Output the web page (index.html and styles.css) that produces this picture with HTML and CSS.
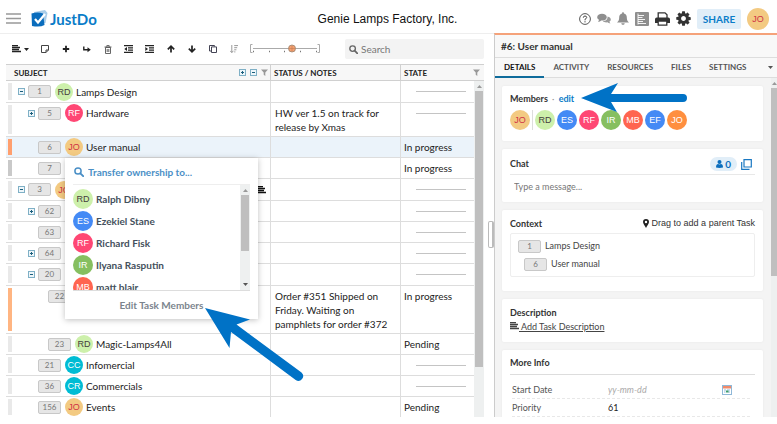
FILE: index.html
```html
<!DOCTYPE html>
<html lang="en">
<head>
<meta charset="utf-8">
<title>JustDo</title>
<link rel="stylesheet" href="styles.css">
</head>
<body>
<svg class="defs" aria-hidden="true">
  <symbol id="plus-box" viewBox="0 0 7 7"><rect x=".5" y=".5" width="6" height="6" fill="#eef6fa" stroke="#7fb0c6"/><path d="M2 3.500h3M3.500 2v3" stroke="#1b5f7d"/></symbol>
  <symbol id="minus-box" viewBox="0 0 7 7"><rect x=".5" y=".5" width="6" height="6" fill="#eef6fa" stroke="#7fb0c6"/><path d="M2 3.500h3" stroke="#1b5f7d"/></symbol>
  <symbol id="funnel" viewBox="0 0 7 7"><path d="M0 .5h7L4.300 3.500V7L2.700 5.800V3.500z" fill="#999"/></symbol>
  <symbol id="search" viewBox="0 0 10 10"><circle cx="4" cy="4" r="3.100" fill="none" stroke="currentColor" stroke-width="1.500"/><path d="M6.300 6.300L9.200 9.200" stroke="currentColor" stroke-width="1.900" stroke-linecap="round"/></symbol>
  <symbol id="lines" viewBox="0 0 9 8"><path d="M0 .5h6M0 2.500h8M0 4.500h7M0 6.500h9" stroke="currentColor" stroke-width="1.400"/></symbol>
</svg>

<header class="topbar">
  <div class="brand">
  <button class="menu" aria-label="Menu"><svg width="15" height="11" viewBox="0 0 15 11"><path d="M0 1h15M0 5.500h15M0 10h15" stroke="#999" stroke-width="1.600"/></svg></button>
  <a class="logo" href="#">
    <svg width="17" height="17" viewBox="0 0 17 17"><path d="M3 2L14 0l2.500 3-2 10-10 1z" fill="#a9cde9"/><path d="M.5 3.500Q7 1.500 12 3.500l1.500 11.500Q9 17.500 1 16z" fill="#0a6dbd"/><path d="M4 9l3 3.500L14 4" fill="none" stroke="#fff" stroke-width="2.200"/></svg>
    <span>JustDo</span>
  </a>
  </div>
  <h1 class="project">Genie Lamps Factory, Inc.</h1>
  <nav class="top-actions">
    <button aria-label="Help"><svg width="12" height="12" viewBox="0 0 12 12"><circle cx="6" cy="6" r="5.400" fill="#fff" stroke="#444" stroke-width=".9"/><path d="M4.300 4.700Q4.400 3 6 3t1.700 1.500Q7.700 5.400 6 6.300V7.300M6 8.200v1.200" fill="none" stroke="#444"/></svg></button>
    <button aria-label="Chats"><svg width="14" height="12" viewBox="0 0 14 12"><path d="M10.500 3.500c2 .4 3.300 1.500 3.300 2.900 0 .9-.5 1.700-1.400 2.200.1.900.5 1.400 1 1.900-1.200 0-2.200-.5-2.900-1.200-2 .3-3.700-.2-4.700-1.100 3 0 5-1.900 4.700-4.700z" fill="#999"/><path d="M5 .8c2.700 0 4.800 1.500 4.800 3.400S7.700 7.600 5 7.600l-.8-.1C3.500 8.200 2.400 8.800 1 8.800c.6-.6.900-1.200 1-2C.900 6.200.2 5.300.2 4.200.2 2.300 2.300.8 5 .8z" fill="#8e8e8e"/></svg></button>
    <button aria-label="Notifications"><svg width="12" height="13" viewBox="0 0 12 13"><path d="M6 .2l.9.400v.8C9 1.900 9.800 3.500 9.800 5.300c0 2.700.7 4 2.200 5.300H0C1.500 9.300 2.200 8 2.200 5.300 2.200 3.500 3 1.900 5.100 1.400V.6zM4.300 11.200h3.400C7.500 12.300 7 12.800 6 12.800s-1.500-.5-1.700-1.600z" fill="#8e8e8e"/></svg></button>
    <button aria-label="Report"><svg width="14" height="14" viewBox="0 0 14 14"><rect width="14" height="14" rx="1" fill="#8e8e8e"/><path d="M3 1.500v11M3 3.500h6M3 5.500h4.500M3 7.500h7M3 9.500h5M3 11.500h8" stroke="#fff" stroke-width=".9"/></svg></button>
    <button aria-label="Print"><svg width="15" height="14" viewBox="0 0 15 14"><path d="M3.200 6V.8h6.800l2 2V6" fill="#fff" stroke="#333" stroke-width="1.300"/><path d="M1.800 5.500h11.400Q15 5.500 15 7.300V11h-3V9H3v2H0V7.300Q0 5.500 1.800 5.500z" fill="#333"/><path d="M3.200 9h8.600v4.200H3.200z" fill="#fff" stroke="#333" stroke-width="1.300"/></svg></button>
    <button aria-label="Settings"><svg width="15" height="15" viewBox="100 100 1592 1592"><path fill="#333" d="M1152 896q0-106-75-181t-181-75-181 75-75 181 75 181 181 75 181-75 75-181zm512-109v222q0 12-8 23t-20 13l-185 28q-19 54-39 91 35 50 107 138 10 12 10 25t-9 23q-27 37-99 108t-94 71q-12 0-26-9l-138-108q-44 23-91 38-16 136-29 186-7 28-36 28h-222q-14 0-24.500-8.500t-11.500-21.500l-28-184q-49-16-90-37l-141 107q-10 9-25 9-14 0-25-11-126-114-165-168-7-10-7-23 0-12 8-23 15-21 51-66.500t54-70.500q-27-50-41-99l-183-27q-13-2-21-12.500t-8-23.500v-222q0-12 8-23t19-13l186-28q14-46 39-92-40-57-107-138-10-12-10-24 0-10 9-23 26-36 98.500-107.500t94.500-71.500q13 0 26 10l138 107q44-23 91-38 16-136 29-186 7-28 36-28h222q14 0 24.500 8.500t11.500 21.500l28 184q49 16 90 37l142-107q9-9 24-9 13 0 25 10 129 119 165 170 7 8 7 22 0 12-8 23-15 21-51 66.500t-54 70.500q26 50 41 98l183 28q13 2 21 12.500t8 23.500z"/></svg></button>
    <button class="share">SHARE</button>
    <span class="avatar big sand">JO</span>
  </nav>
</header>

<div class="work">
<main class="left">
  <div class="toolbar">
    <button class="state-btn" aria-label="State"><svg width="9" height="8"><use href="#lines"/></svg><svg width="5" height="3" viewBox="0 0 5 3"><path d="M0 0h5L2.500 3z" fill="#222"/></svg></button>
    <button aria-label="Note"><svg width="8" height="8" viewBox="0 0 8 8"><path d="M.5.5h7v4.500L5 7.500H.5zM5 7.500V5h2.500" fill="#fff" stroke="#444"/></svg></button>
    <button aria-label="Add"><svg width="8" height="8" viewBox="0 0 8 8"><path d="M4 .8v6.400M.8 4h6.400" stroke="#222" stroke-width="1.800"/></svg></button>
    <button aria-label="Add child"><svg width="8" height="8" viewBox="0 0 8 8"><path d="M.8 1.500v3.200H5" fill="none" stroke="#222" stroke-width="1.400"/><path d="M4.500 2.200L7.800 4.700 4.500 7.200z" fill="#222"/></svg></button>
    <button aria-label="Delete"><svg width="8" height="9" viewBox="0 0 8 9"><path d="M1.500 2.500h5v6h-5zM.5 2h7M2.800 1.800V.6h2.400v1.200M3.200 4v3M4.800 4v3" fill="none" stroke="#555" stroke-width=".9"/></svg></button>
    <button aria-label="Outdent"><svg width="9" height="8" viewBox="0 0 9 8"><path d="M0 .7h9M4 2.900h5M4 5.100h5M0 7.300h9" stroke="#222" stroke-width="1.200"/><path d="M3 2v4L.3 4z" fill="#222"/></svg></button>
    <button aria-label="Indent"><svg width="9" height="8" viewBox="0 0 9 8"><path d="M0 .7h9M4 2.900h5M4 5.100h5M0 7.300h9" stroke="#222" stroke-width="1.200"/><path d="M.3 2v4L3 4z" fill="#222"/></svg></button>
    <button aria-label="Move up"><svg width="8" height="8" viewBox="0 0 8 8"><path d="M4 7.500V1.500M.8 4.300L4 1.200l3.200 3.100" fill="none" stroke="#222" stroke-width="1.700"/></svg></button>
    <button aria-label="Move down"><svg width="8" height="8" viewBox="0 0 8 8"><path d="M4 .5v6M.8 3.700L4 6.800l3.200-3.100" fill="none" stroke="#222" stroke-width="1.700"/></svg></button>
    <button aria-label="Duplicate"><svg width="8" height="8" viewBox="0 0 8 8"><path d="M2.500 1.900h5v5.600h-5zM5.500 1.500V.5h-5v5.500h1.500" fill="none" stroke="#445"/></svg></button>
    <button aria-label="Sort"><svg width="8" height="8" viewBox="0 0 8 8"><path d="M1.800 0v7.500M.2 5.800l1.600 1.800 1.600-1.800M4.200.6H8M4.200 2.700h3M4.200 4.800h2.200M4.200 6.900h1.200" fill="none" stroke="#999"/></svg></button>
    <svg class="zoomer" width="70" height="10" viewBox="0 0 70 10"><path d="M2.500.5h-2v8h2M67.500.5h2v8h-2" fill="none" stroke="#aaa"/><path d="M3 4.500h64" stroke="#aaa"/><path d="M3 7.500h1M19 7.500h1M34 7.500h1M50 7.500h1M66 7.500h1" stroke="#777" stroke-width="1.400"/><circle cx="42" cy="4.500" r="3.500" fill="#f4a070" stroke="#99836f" stroke-width=".8"/><path d="M39 4.500h6M42 2v5" stroke="#c47a50" stroke-width=".6"/></svg>
    <label class="search"><svg width="9" height="9"><use href="#search"/></svg><input type="text" placeholder="Search" aria-label="Search"></label>
  </div>

  <div class="grid-wrap">
  <table class="tasks">
    <colgroup><col class="c-subject"><col class="c-notes"><col class="c-state"></colgroup>
    <thead><tr>
      <th><div class="th"><span>SUBJECT</span><span class="tools"><svg width="7" height="7"><use href="#plus-box"/></svg><svg width="7" height="7"><use href="#minus-box"/></svg><svg width="7" height="7"><use href="#funnel"/></svg></span></div></th>
      <th>STATUS / NOTES</th>
      <th><div class="th"><span>STATE</span><svg width="7" height="7"><use href="#funnel"/></svg></div></th>
    </tr></thead>
    <tbody>
      <tr class="parent"><td><div class="subj l0"><i class="bar"></i><svg class="tog"><use href="#minus-box"/></svg><span class="num">1</span><span class="avatar lime">RD</span><span>Lamps Design</span></div></td><td></td><td class="none"><hr></td></tr>
      <tr><td><div class="subj l1"><i class="bar"></i><svg class="tog"><use href="#plus-box"/></svg><span class="num">5</span><span class="avatar pink">RF</span><span>Hardware</span></div></td><td>HW ver 1.5 on track for release by Xmas</td><td class="none"><hr></td></tr>
      <tr class="selected"><td><div class="subj l1"><i class="bar orange"></i><span class="tog"></span><span class="num">6</span><span class="avatar sand">JO</span><span>User manual</span></div></td><td></td><td>In progress</td></tr>
      <tr><td><div class="subj l1"><i class="bar gray"></i><span class="tog"></span><span class="num">7</span></div></td><td></td><td>In progress</td></tr>
      <tr class="parent"><td><div class="subj l0"><i class="bar"></i><svg class="tog"><use href="#minus-box"/></svg><span class="num">3</span><span class="avatar sand">JO</span><svg class="desc" width="9" height="8"><use href="#lines"/></svg></div></td><td></td><td class="none"><hr></td></tr>
      <tr><td><div class="subj l1"><i class="bar"></i><svg class="tog"><use href="#plus-box"/></svg><span class="num">62</span></div></td><td></td><td class="none"><hr></td></tr>
      <tr><td><div class="subj l1"><i class="bar"></i><span class="tog"></span><span class="num">63</span></div></td><td></td><td class="none"><hr></td></tr>
      <tr><td><div class="subj l1"><i class="bar"></i><svg class="tog"><use href="#plus-box"/></svg><span class="num">64</span></div></td><td></td><td class="none"><hr></td></tr>
      <tr class="parent"><td><div class="subj l1"><i class="bar"></i><svg class="tog"><use href="#minus-box"/></svg><span class="num">20</span></div></td><td></td><td class="none"><hr></td></tr>
      <tr><td><div class="subj l2"><i class="bar peach"></i><span class="tog"></span><span class="num">22</span></div></td><td>Order #351 Shipped on Friday. Waiting on pamphlets for order #372</td><td>In progress</td></tr>
      <tr><td><div class="subj l2"><i class="bar"></i><span class="tog"></span><span class="num">23</span><span class="avatar lime">RD</span><span>Magic-Lamps4All</span></div></td><td></td><td>Pending</td></tr>
      <tr><td><div class="subj l1"><i class="bar"></i><span class="tog"></span><span class="num">21</span><span class="avatar cyan">CC</span><span>Infomercial</span></div></td><td></td><td class="none"><hr></td></tr>
      <tr><td><div class="subj l1"><i class="bar"></i><span class="tog"></span><span class="num">36</span><span class="avatar cyan">CR</span><span>Commercials</span></div></td><td></td><td class="none"><hr></td></tr>
      <tr><td><div class="subj l1"><i class="bar"></i><span class="tog"></span><span class="num">156</span><span class="avatar sand">JO</span><span>Events</span></div></td><td></td><td>Pending</td></tr>
    </tbody>
  </table>
  <div class="scroll grid-scroll"><svg width="5" height="3" viewBox="0 0 5 3"><path d="M2.500 0L5 3H0z" fill="#999"/></svg><i></i></div>
  </div>

  <div class="popup">
    <div class="popup-head"><svg width="10" height="10"><use href="#search"/></svg><input type="text" placeholder="Transfer ownership to..." aria-label="Transfer ownership to"></div>
    <div class="popup-body">
      <ul class="people">
        <li><span class="avatar mid lime">RD</span>Ralph Dibny</li>
        <li><span class="avatar mid blue">ES</span>Ezekiel Stane</li>
        <li><span class="avatar mid pink">RF</span>Richard Fisk</li>
        <li><span class="avatar mid green">IR</span>Ilyana Rasputin</li>
        <li><span class="avatar mid red">MB</span>matt blair</li>
      </ul>
      <div class="scroll"><svg width="5" height="3" viewBox="0 0 5 3"><path d="M2.500 0L5 3H0z" fill="#999"/></svg><i></i><svg width="5" height="3" viewBox="0 0 5 3"><path d="M0 0h5L2.500 3z" fill="#555"/></svg></div>
    </div>
    <button class="popup-foot">Edit Task Members</button>
  </div>
  <div class="splitter"></div>
</main>

<aside class="details">
  <h2 class="task-title">#6: User manual</h2>
  <nav class="tabs">
    <button class="active">DETAILS</button><button>ACTIVITY</button><button>RESOURCES</button><button>FILES</button><button>SETTINGS</button>
    <svg width="5" height="3" viewBox="0 0 5 3"><path d="M0 0h5L2.500 3z" fill="#555"/></svg>
  </nav>
  <div class="pane">
    <div class="cards">
      <section class="card members">
        <h3>Members <span class="dot">·</span> <a href="#">edit</a></h3>
        <div class="faces"><span class="avatar mid sand">JO</span><i class="sep"></i><span class="avatar mid lime">RD</span><span class="avatar mid blue">ES</span><span class="avatar mid pink">RF</span><span class="avatar mid green">IR</span><span class="avatar mid red">MB</span><span class="avatar mid blue">EF</span><span class="avatar mid amber">JO</span></div>
      </section>
      <section class="card chat">
        <div class="chat-head"><h3>Chat</h3><span class="pill"><svg width="7" height="8" viewBox="0 0 7 8"><circle cx="3.500" cy="2.100" r="2" fill="#0a6dbd"/><path d="M0 7.600C0 5 1 4.200 2 4.100q1.500.8 3 0C6 4.200 7 5 7 7.600q-3.500.8-7 0z" fill="#0a6dbd"/></svg>0</span><button aria-label="Pop out"><svg width="11" height="11" viewBox="0 0 11 11"><path d="M3 .7h7.300V8H3zM.7 3v7.300H8.500" fill="none" stroke="#1a78c2" stroke-width="1.200"/></svg></button></div>
        <input type="text" placeholder="Type a message..." aria-label="Message">
      </section>
      <section class="card context">
        <div class="context-head"><h3>Context</h3><span class="drag"><svg width="6" height="9" viewBox="0 0 6 9"><path fill-rule="evenodd" d="M3 0a3 3 0 0 1 3 3c0 1.500-1.800 3.500-3 6C1.800 6.500 0 4.500 0 3a3 3 0 0 1 3-3zm0 1.800a1.200 1.200 0 1 0 0 2.400 1.200 1.200 0 0 0 0-2.400z" fill="#222"/></svg>Drag to add a parent Task</span></div>
        <ul class="tree"><li><span class="num">1</span>Lamps Design</li><li class="child"><span class="num">6</span>User manual</li></ul>
      </section>
      <section class="card description">
        <h3>Description</h3>
        <a href="#"><svg width="9" height="8"><use href="#lines"/></svg> Add Task Description</a>
      </section>
      <section class="card info">
        <h3>More Info</h3>
        <div class="field"><label for="start">Start Date</label><input id="start" class="date" type="text" placeholder="yy-mm-dd"><svg width="10" height="10" viewBox="0 0 10 10"><rect x=".5" y=".5" width="9" height="9" fill="#fff" stroke="#8fb8d8"/><path d="M1 1h8v2.500H1z" fill="#f08a6a"/><path d="M2 5h2M5 5h3M2 7h1.500M6 7h2" stroke="#8fb8d8"/><path d="M4 6.500h2.500" stroke="#3c9c6a" stroke-width="2"/></svg></div>
        <div class="field"><label for="prio">Priority</label><input id="prio" type="text" value="61"></div>
      </section>
    </div>
    <div class="scroll pane-scroll"><svg width="5" height="3" viewBox="0 0 5 3"><path d="M2.500 0L5 3H0z" fill="#999"/></svg><i></i></div>
  </div>
  <svg class="arrow arrow-edit" width="108" height="32" viewBox="0 0 108 32"><path d="M0 15L37 0 30 11H102a4 4 0 0 1 0 8H30l6 10z" fill="#0072c6"/></svg>
</aside>
<svg class="arrow arrow-members" width="100" height="76" viewBox="0 0 100 76"><path d="M0 0L45 11.500 31.500 16.500 96.500 64.500a4.800 4.800 0 0 1-5.800 7.600L26 24l-1.500 16z" fill="#0072c6"/></svg>
</div>
</body>
</html>
```
FILE: styles.css
```css
* { box-sizing: border-box; }

body {
  margin: 0;
  height: 100vh;
  padding-bottom: 7px;
  display: flex;
  flex-direction: column;
  overflow: hidden;
  background: #fff;
  color: #222;
  font: 10px/14px Lato, "Liberation Sans", sans-serif;
}

h1, h2, h3, ul, hr { margin: 0; padding: 0; }
ul { list-style: none; }
button, input { font: inherit; color: inherit; border: 0; background: none; padding: 0; margin: 0; }
input { min-width: 0; outline: 0; }
svg { display: block; flex: none; }
.defs { position: absolute; width: 0; height: 0; }

/* Top bar */
.topbar {
  height: 33px;
  flex: none;
  display: grid;
  grid-template-columns: 1fr auto 1fr;
  align-items: center;
  padding: 4px 8px 0 6px;
}
.brand { display: flex; align-items: center; }
.logo {
  display: flex;
  align-items: center;
  gap: 2px;
  margin-left: 10px;
  color: #0a7cc8;
  font-size: 15px;
  font-weight: 700;
  line-height: 20px;
  text-decoration: none;
}
.project {
  text-align: center;
  font: 400 12px/16px "Liberation Sans", sans-serif;
  color: #111;
}
.top-actions { display: flex; align-items: center; justify-content: flex-end; gap: 6px; }
.share {
  width: 44px;
  height: 20px;
  background: #e1eef8;
  color: #0a7cc8;
  font-weight: 700;
  border-radius: 2px;
}

/* Avatars and task numbers */
.avatar {
  flex: none;
  width: 18px;
  height: 18px;
  border-radius: 50%;
  text-align: center;
  font: 400 9px/18px "Liberation Sans", sans-serif;
  color: #fff;
}
.avatar.mid { width: 20px; height: 20px; line-height: 20px; }
.avatar.big { width: 22px; height: 22px; line-height: 22px; }
.sand { background: #f3ca82; color: #cf3345; }
.lime { background: #cdf0ab; color: #463c3c; }
.pink { background: #ff4774; }
.blue { background: #448af5; }
.green { background: #86bf60; }
.red { background: #ff6550; }
.amber { background: #ff8f3f; }
.cyan { background: #00bcd4; }

.num {
  flex: none;
  width: 23px;
  height: 13px;
  border: 1px solid #c8c8c8;
  border-radius: 2px;
  background: #e6e6e6;
  color: #777;
  font-size: 8px;
  line-height: 11px;
  text-align: center;
}

/* Work area */
.work { position: relative; flex: 1; min-height: 0; display: flex; }
.left {
  position: relative;
  flex: 1;
  min-width: 0;
  padding: 0 10px 0 6px;
  border-top: 1px solid #eee;
  display: flex;
  flex-direction: column;
}
.toolbar {
  height: 30px;
  flex: none;
  display: flex;
  align-items: center;
  padding-left: 6px;
}
.toolbar button { flex: none; width: 21px; display: flex; justify-content: center; align-items: center; }
.toolbar .state-btn { width: 22px; gap: 3px; justify-content: flex-start; }
.zoomer { margin: 0 25px 0 6px; }
.search {
  flex: 1;
  min-width: 0;
  height: 20px;
  display: flex;
  align-items: center;
  gap: 3px;
  padding-left: 4px;
  background: #f3f3f3;
  color: #666;
  border-radius: 2px;
}
.search input { flex: 1; }
::placeholder { color: #777; opacity: 1; }

/* Task table */
.grid-wrap { position: relative; flex: 1; min-height: 0; overflow: hidden; }
.tasks { width: 100%; table-layout: fixed; border-collapse: separate; border-spacing: 0; }
.c-subject { width: 265px; }
.c-notes { width: 130px; }
th {
  height: 17px;
  padding: 0 4px 0 3px;
  background: #f7f7f7;
  border: solid #d0d0d0;
  border-width: 1px 1px 1px 0;
  text-align: left;
  font-size: 8px;
  line-height: 14px;
}
th:first-child { padding: 0 2px 0 8px; }
th:last-child { border-right: 0; }
.th { display: flex; align-items: center; justify-content: space-between; }
.tools { display: flex; gap: 4px; }
td {
  height: 21px;
  padding: 3px 4px 2px;
  border-right: 1px solid #ddd;
  border-bottom: 1px solid #ddd;
  vertical-align: top;
}
td:last-child { padding-left: 3px; border-right: 0; }
td:first-child { padding: 0; position: relative; }
.parent td { height: 22px; }
.selected td { background: #ebf3fa; }
.none hr { width: 50px; margin: 7px 0 0 12px; border: 0; border-top: 1px solid #c4c4c4; }
.subj { display: flex; align-items: center; height: 20px; padding-left: 12px; }
.parent .subj { height: 21px; }
.subj.l1 { padding-left: 22px; }
.subj.l2 { padding-left: 32px; }
.tog { width: 7px; height: 7px; margin-right: 3px; }
.subj .avatar { margin: 0 3px 0 4px; }
.desc { margin-left: auto; margin-right: 4px; color: #111; }
.bar { position: absolute; left: 2px; top: 2px; bottom: 2px; width: 4px; background: #e9e9e9; }
.bar.orange { background: #ff9f6e; }
.bar.peach { background: #ffb582; }
.bar.gray { background: #c9c9c9; }

/* Scroll bars */
.scroll {
  flex: none;
  width: 10px;
  display: flex;
  flex-direction: column;
  align-items: center;
  gap: 3px;
  padding: 4px 1px;
  background: #eef0f0;
}
.scroll i { width: 100%; height: 56px; background: #bfbfbf; }
.grid-scroll { position: absolute; right: 0; top: 17px; bottom: 0; }
.grid-scroll i { height: 84%; }
.scroll svg:last-child { margin-top: auto; }

/* Ownership menu */
.popup {
  position: absolute;
  left: 65px;
  top: 124px;
  width: 193px;
  padding: 0 8px;
  background: #fff;
  box-shadow: 0 1px 6px rgba(0, 0, 0, .25);
  font-weight: 700;
}
.popup-head {
  display: flex;
  align-items: center;
  gap: 4px;
  height: 27px;
  padding: 2px 0 0 1px;
  border-bottom: 1px solid #eee;
  color: #4a8fc6;
}
.popup-head input { flex: 1; }
.popup-head input::placeholder { color: #4a8fc6; }
.popup-body { display: flex; height: 106px; overflow: hidden; border-bottom: 1px solid #ddd; }
.people { flex: 1; padding-top: 3px; }
.people li { display: flex; align-items: center; gap: 3px; height: 22px; color: #44505c; }
.popup-foot { display: block; width: 100%; height: 28px; text-align: center; color: #7b848d; }

.splitter {
  position: absolute;
  right: 0;
  top: 187px;
  width: 6px;
  height: 27px;
  border: 1px solid #bbb;
  border-right-width: 2px;
  border-radius: 2px;
  background: #fff;
}

/* Details */
.details {
  position: relative;
  flex: none;
  width: 283px;
  display: flex;
  flex-direction: column;
  border-top: 2px solid #f5a27a;
  border-left: 1px solid #ccc;
  background: #f4f4f4;
}
.task-title {
  height: 23px;
  flex: none;
  padding-left: 6px;
  border-bottom: 1px solid #ddd;
  background: #f8f8f8;
  font-size: 10px;
  line-height: 22px;
  color: #333;
}
.tabs {
  height: 20px;
  flex: none;
  display: flex;
  align-items: center;
  border-bottom: 1px solid #ddd;
  background: #f8f8f8;
  font-size: 8px;
  font-weight: 700;
  color: #555;
}
.tabs button { height: 20px; padding: 0 9px; border-bottom: 2px solid transparent; }
.tabs .active { color: #111; border-color: #0f6c9c; }
.tabs svg { margin-left: auto; margin-right: 4px; }
.pane { flex: 1; min-height: 0; display: flex; overflow: hidden; }
.cards { flex: 1; min-width: 0; display: flex; flex-direction: column; gap: 8px; padding: 8px 8px 0 7px; }
.pane-scroll { width: 6px; padding: 4px 0; }
.pane-scroll i { height: 188px; }
.card {
  flex: none;
  padding: 7px 8px;
  background: #fff;
  border-radius: 2px;
  box-shadow: 0 0 3px rgba(0, 0, 0, .05);
  font-size: 9px;
  color: #444;
}
.card h3 { font-size: 9px; line-height: 14px; color: #333; }
.members { padding: 6px 8px 11px; }
.members a { color: #0a7cc8; text-decoration: none; }
.dot { margin: 0 2px; font-weight: 400; color: #999; }
.faces { display: flex; gap: 2px; margin-top: 4px; }
.sep { width: 1px; background: #ddd; }
.chat { padding: 8px; }
.chat-head { display: flex; align-items: center; padding: 0 3px 3px 0; border-bottom: 1px solid #e8e8e8; }
.pill {
  display: flex;
  align-items: center;
  gap: 2px;
  height: 14px;
  margin: 0 4px 0 auto;
  padding: 0 6px;
  border-radius: 7px;
  background: #e1eef8;
  color: #0a6dbd;
  font-size: 10px;
  font-weight: 700;
}
.chat > input { display: block; width: 100%; height: 14px; margin-top: 5px; padding-left: 4px; }
.context { padding-bottom: 14px; }
.context-head { display: flex; justify-content: space-between; }
.drag { display: flex; align-items: center; gap: 3px; height: 12px; font: 400 9px/12px "Liberation Sans", sans-serif; color: #333; }
.tree { margin-top: 2px; padding: 5px 7px; border: 1px solid #eee; border-radius: 2px; display: flex; flex-direction: column; gap: 4px; }
.tree li { display: flex; align-items: center; gap: 4px; height: 14px; }
.tree .child { padding-left: 6px; }
.description { padding-bottom: 8px; }
.description a { display: inline-block; color: #444; }
.description a svg { display: inline-block; }
.info { flex: 1; padding-top: 6px; }
.info h3 { padding-bottom: 4px; margin-bottom: 6px; border-bottom: 1px solid #ddd; }
.field { display: flex; align-items: center; height: 18px; margin: 0 5px 0 2px; border-bottom: 1px dashed #e8e8e8; }
.field label { width: 96px; flex: none; color: #555; }
.field input { flex: 1; color: #222; }
.field svg { margin-right: 18px; }
.date { font-style: italic; }
.date::placeholder { color: #aaa; }

/* Callout arrows */
.arrow { position: absolute; pointer-events: none; }
.arrow-edit { left: 86px; top: 48px; }
.arrow-members { left: 205px; top: 275px; }
```
